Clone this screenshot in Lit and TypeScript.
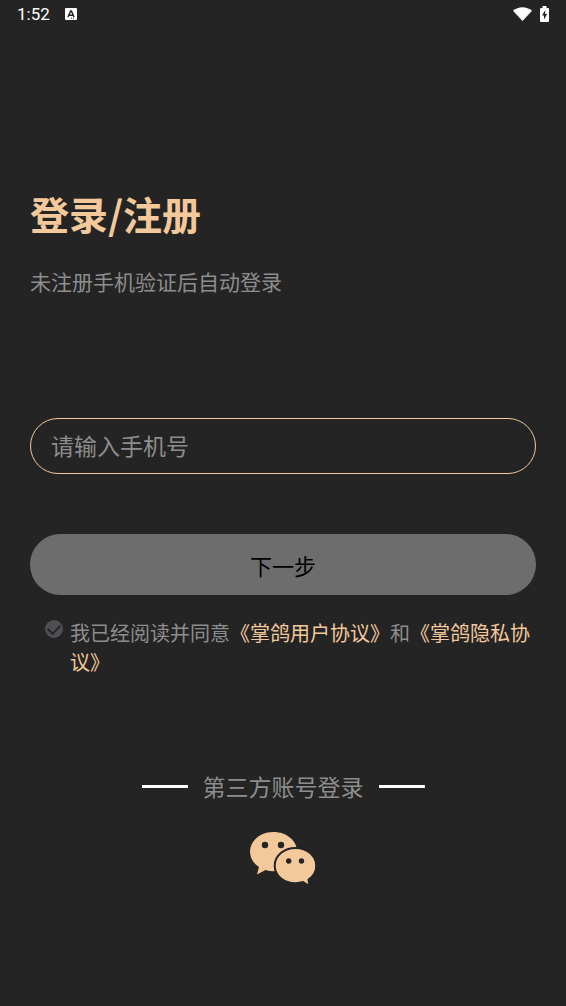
import { LitElement, html, css } from "lit";
import { customElement, state } from "lit/decorators.js";

@customElement("status-bar")
class StatusBar extends LitElement {
  static styles = css`
    :host {
      display: flex;
      align-items: center;
      height: 28px;
      padding: 0 17px;
      color: #fff;
      font: 400 17px/28px Roboto, sans-serif;
    }
    .keyboard {
      margin-left: 15px;
    }
    .wifi {
      margin-left: auto;
    }
    .battery {
      margin-left: 8px;
    }
    svg {
      display: block;
      fill: currentColor;
    }
  `;

  render() {
    return html`
      <span>1:52</span>
      <svg class="keyboard" width="12" height="12" viewBox="0 0 12 12" aria-hidden="true">
        <rect width="12" height="12" rx="1" />
        <path d="M3 9 5.6 3h.8L9 9M4 7.2h4" fill="none" stroke="#242424" stroke-width="1.5" />
        <path d="M6 10.2h1M8 10.2h1" stroke="#242424" stroke-width="1" />
      </svg>
      <svg class="wifi" width="19" height="14" viewBox="0 0 18 14" preserveAspectRatio="none" aria-hidden="true">
        <path d="M0 3.8C5-1.1 13-1.1 18 3.8L9 14z" />
      </svg>
      <svg class="battery" width="9" height="16" viewBox="0 0 9 16" aria-hidden="true">
        <path d="M2.500 0h4v2H8q1 0 1 1v12q0 1-1 1H1q-1 0-1-1V3q0-1 1-1h1.500z" />
        <path d="M5.300 4 2 9.500h2V13.500L7.200 8h-2z" fill="#242424" />
      </svg>
    `;
  }
}

@customElement("app-root")
class AppRoot extends LitElement {
  static styles = css`
    :host {
      display: block;
      min-height: 100vh;
      background: #242424;
      color: #8d8d8d;
      font-family: "Noto Sans CJK SC", sans-serif;
    }
    * {
      box-sizing: border-box;
    }
    main {
      padding: 156px 30px 0;
    }
    h1 {
      margin: 0;
      color: #f3c99c;
      font-size: 39px;
      font-weight: 700;
      line-height: 58px;
    }
    .hint {
      margin: 24px 0 0;
      font-size: 21px;
      line-height: 30px;
    }
    form {
      margin: 122px 0 0;
    }
    .phone {
      display: block;
      width: 100%;
      height: 56px;
      padding: 0 20px 2px;
      border: 1px solid #f3c99c;
      border-radius: 28px;
      outline: none;
      background: transparent;
      color: #f3c99c;
      font: 23px/32px "Noto Sans CJK SC", sans-serif;
    }
    .phone::placeholder {
      color: #8d8d8d;
      opacity: 1;
    }
    .next {
      display: block;
      width: 100%;
      height: 61px;
      margin: 60px 0 0;
      padding: 0;
      border: 0;
      border-radius: 31px;
      background: #6d6d6d;
      color: #000;
      font: 22px/32px "Noto Sans CJK SC", sans-serif;
    }
    .agreement {
      display: flex;
      align-items: flex-start;
      gap: 7px;
      margin: 23px 0 0;
      padding-left: 15px;
      font-size: 20px;
      line-height: 29px;
    }
    .agree {
      display: grid;
      flex: none;
      place-items: center;
      appearance: none;
      width: 18px;
      height: 18px;
      margin: 2px 0 0;
      border-radius: 50%;
      background: #4e4e55;
    }
    .agree::after {
      content: "";
      width: 10px;
      height: 6px;
      margin-bottom: 3px;
      border: solid #242428;
      border-width: 0 0 2px 2px;
      transform: rotate(-45deg);
    }
    .agree:checked {
      background: #f3c99c;
    }
    a {
      color: #f3c99c;
      text-decoration: none;
    }
    .other {
      display: flex;
      flex-direction: column;
      align-items: center;
      margin-top: 94px;
    }
    .heading {
      display: flex;
      align-items: center;
      gap: 15px;
      margin: 0;
      font-size: 23px;
      font-weight: 400;
      line-height: 32px;
    }
    .heading::before,
    .heading::after {
      content: "";
      width: 46px;
      height: 3px;
      background: #fff;
    }
    .wechat {
      display: block;
      margin: 29px 0 0;
      padding: 0;
      border: 0;
      background: none;
    }
    .wechat svg {
      display: block;
    }
  `;

  @state() private agreed = false;

  render() {
    return html`
      <status-bar></status-bar>
      <main>
        <h1>登录/注册</h1>
        <p class="hint">未注册手机验证后自动登录</p>
        <form @submit=${(e: Event) => e.preventDefault()}>
          <input class="phone" type="tel" placeholder="请输入手机号" aria-label="请输入手机号" />
          <button class="next" type="submit">下一步</button>
          <div class="agreement">
            <input
              class="agree"
              id="agree"
              type="checkbox"
              .checked=${this.agreed}
              @change=${(e: Event) => (this.agreed = (e.target as HTMLInputElement).checked)}
            />
            <div><label for="agree">我已经阅读并同意</label><a href="#terms">《掌鸽用户协议》</a>和<a href="#privacy">《掌鸽隐私协议》</a></div>
          </div>
        </form>
        <section class="other">
          <h2 class="heading">第三方账号登录</h2>
          <button class="wechat" type="button" aria-label="微信">
            <svg width="68" height="56" viewBox="0 0 68 56" aria-hidden="true">
              <g fill="#f3c99c" stroke-linejoin="round">
                <path d="M24.500 1C11.500 1 1 9.500 1 20.500c0 6.500 3.300 12 9 15.500L8 43.500l8.500-4.500c2.700.8 5.200 1.200 8 1.200C37.500 40.200 48 31.500 48 20.500S37.500 1 24.500 1z" />
                <path stroke="#242424" stroke-width="2" d="M46.500 17c-11.500 0-20.800 7.700-20.800 17.700s9.300 17.500 20.800 17.500c2.700 0 5.200-.4 7.500-1.200l6.500 4-1-6.500c5-3.200 7.700-8.200 7.700-13.800C67.200 24.700 58 17 46.500 17z" />
              </g>
              <g fill="#242424">
                <circle cx="16" cy="14" r="3.200" />
                <circle cx="32" cy="14" r="3.200" />
                <circle cx="39.700" cy="30" r="2.700" />
                <circle cx="52.500" cy="30" r="2.700" />
              </g>
            </svg>
          </button>
        </section>
      </main>
    `;
  }
}
